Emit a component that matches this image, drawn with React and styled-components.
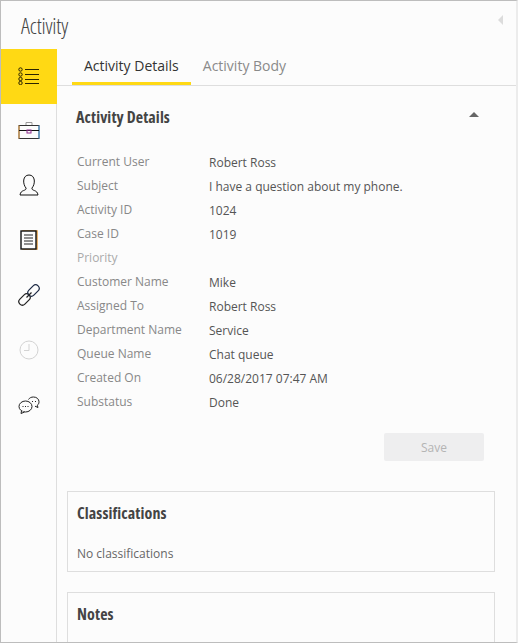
import React from "react";
import styled, { createGlobalStyle } from "styled-components";

const GlobalStyle = createGlobalStyle`
  html, body {
    margin: 0;
    padding: 0;
    height: 100%;
    overflow: hidden;
    background: #fcfcfc;
  }
  * { box-sizing: border-box; }
`;

const Panel = styled.div`
  width: 518px;
  height: 643px;
  overflow: hidden;
  display: flex;
  flex-direction: column;
  position: relative;
  background: #fcfcfc;
  border-top: 1px solid #bdbdbd;
  border-left: 1px solid #bdbdbd;
  border-bottom: 1px solid #bdbdbd;
  border-right: 2px solid #ececec;
  font-family: "Open Sans", "Liberation Sans", sans-serif;
  font-size: 12px;
  color: #555;
`;

const Header = styled.div`
  flex: 0 0 48px;
  display: flex;
  align-items: center;
  justify-content: space-between;
  padding: 0 13px 0 20px;
`;

const Title = styled.h1`
  margin: 0 0 1px;
  font-weight: 300;
  font-size: 22px;
  letter-spacing: -0.2px;
  color: #444;
  font-stretch: 75%;
`;

const CollapseArrow = styled.span`
  width: 0;
  height: 0;
  margin-bottom: 10px;
  border-style: solid;
  border-width: 5px 5px 5px 0;
  border-color: transparent #dcdcdc transparent transparent;
`;

const Body = styled.div`
  flex: 1;
  display: flex;
  min-height: 0;
`;

const Sidebar = styled.nav`
  flex: 0 0 56px;
  border-right: 1px solid #dedede;
  display: flex;
  flex-direction: column;
`;

const NavItem = styled.div`
  flex: 0 0 55px;
  margin-right: ${(p) => (p.$active ? "-1px" : "0")};
  padding-bottom: ${(p) => (p.$active ? "2px" : "4px")};
  position: relative;
  background: ${(p) => (p.$active ? "#ffd914" : "transparent")};
  display: flex;
  align-items: center;
  justify-content: center;
  opacity: ${(p) => (p.$muted ? 0.2 : 1)};
`;

const Main = styled.main`
  flex: 1;
  min-width: 0;
  display: flex;
  flex-direction: column;
`;

const Tabs = styled.div`
  flex: 0 0 37px;
  display: flex;
  padding-left: 15px;
  border-bottom: 1px solid #dedede;
`;

const Tab = styled.div`
  height: 36px;
  padding: 7px 12px 0;
  font-size: 14px;
  line-height: 19px;
  color: ${(p) => (p.$active ? "#333" : "#8a8a8a")};
  border-bottom: 3px solid ${(p) => (p.$active ? "#ffd914" : "transparent")};
`;

const Details = styled.section`
  padding: 0 33px 0 19px;
`;

const SectionHead = styled.div`
  display: flex;
  align-items: center;
  justify-content: space-between;
  height: 62px;
  padding-right: 4px;
`;

const Heading = styled.h2`
  margin: 0;
  font-size: 16px;
  line-height: 22px;
  font-weight: 700;
  font-stretch: 75%;
  letter-spacing: 0.1px;
  color: #444;
  white-space: nowrap;
`;

const Caret = styled.span`
  width: 0;
  height: 0;
  margin: 0 0 6px;
  border-style: solid;
  border-width: 0 5px 5px 5px;
  border-color: transparent transparent #666 transparent;
`;

const Fields = styled.dl`
  margin: 2px 0 0 1px;
  display: grid;
  grid-template-columns: 132px 1fr;
  grid-auto-rows: 24px;
  align-items: center;
`;

const Label = styled.dt`
  color: ${(p) => (p.$faint ? "#aaa" : "#888")};
  line-height: 24px;
`;

const Value = styled.dd`
  margin: 1px 0 0;
  color: #555;
  line-height: 24px;
`;

const Actions = styled.div`
  display: flex;
  justify-content: flex-end;
  margin: 19px -1px 0 0;
`;

const SaveButton = styled.button`
  width: 100px;
  height: 28px;
  border: 0;
  border-radius: 2px;
  background: #eeeeef;
  color: #b4b4b4;
  font: inherit;
`;

const Cards = styled.div`
  margin-top: 30px;
  padding: 0 21px 0 10px;
  display: flex;
  flex-direction: column;
  gap: 20px;
`;

const Card = styled.div`
  border: 1px solid #dedede;
  padding: 10px 9px 8px;
  min-height: 81px;
`;

const CardTitle = styled(Heading)`
  margin-bottom: 21px;
`;

const EmptyText = styled.div`
  line-height: 18px;
  color: #666;
`;

const ListIcon = () => (
  <svg width="22" height="18" viewBox="0 0 22 18" fill="none" stroke="#2b2400">
    <circle cx="2.500" cy="2.500" r="1.700" />
    <circle cx="2.500" cy="7.500" r="1.700" />
    <circle cx="2.500" cy="12" r="1.700" />
    <circle cx="2.500" cy="16" r="1.700" />
    <path d="M7 2.500h14M7 7.500h14M7 12.500h14M7 16.500h14" />
  </svg>
);

const CaseIcon = () => (
  <svg width="22" height="18" viewBox="0 0 22 18" fill="none">
    <path d="M8 4V1.500h6V4" stroke="#999" />
    <rect x="1" y="4.500" width="20" height="13" stroke="#333" />
    <path d="M1 4.500v13" stroke="#e29a3c" />
    <path d="M21 4.500v13" stroke="#4aa3e8" />
    <path d="M1 9.500h20" stroke="#111" />
    <rect x="9" y="9" width="4" height="3" stroke="#8e2a8e" />
  </svg>
);

const PersonIcon = () => (
  <svg width="20" height="22" viewBox="0 0 20 22" fill="none" stroke="#111">
    <path d="M7 14C3.500 10 3.500 1 10 1s6.500 9 3 13c-.5 1.500 1 2 2.500 2.600 1.700.7 3 1.400 3.500 4.400H1c.5-3 1.800-3.700 3.500-4.400C6 16 7.500 15.500 7 14z" />
  </svg>
);

const NotesIcon = () => (
  <svg width="18" height="20" viewBox="0 0 18 20" fill="none">
    <rect x="3" y="1" width="14" height="18" stroke="#e29a3c" strokeWidth="1.500" />
    <rect x="1" y="1" width="15" height="18" fill="#fcfcfc" stroke="#111" strokeWidth="1.400" />
    <path d="M4 5h9M4 8h9M4 11h9M4 14h9" stroke="#222" />
  </svg>
);

const LinkIcon = () => (
  <svg width="22" height="22" viewBox="0 0 22 22" fill="none" stroke="#222" strokeWidth="1.200">
    <rect x="0" y="12" width="13" height="7" rx="3.500" transform="rotate(-45 6.500 15.500)" />
    <rect x="9" y="3" width="13" height="7" rx="3.500" transform="rotate(-45 15.500 6.500)" stroke="#1d2a44" />
    <path d="M8.500 13.500l5-5" />
  </svg>
);

const ClockIcon = () => (
  <svg width="20" height="20" viewBox="0 0 20 20" fill="none" stroke="#333">
    <circle cx="10" cy="10" r="9" />
    <path d="M10 4v6.500H5" />
  </svg>
);

const ChatIcon = () => (
  <svg width="22" height="18" viewBox="0 0 22 18" fill="none" stroke="#222">
    <path d="M10.500 3.500C11.500 1.800 13.300 1 15.500 1c3.200 0 5.500 2.100 5.500 4.800 0 1.500-.6 2.700-1.700 3.500l.7 2.200-3-1.300" />
    <ellipse cx="7.500" cy="10.500" rx="6.500" ry="5.500" fill="#fcfcfc" />
    <path d="M3.500 15l-.5 2.500 3.500-1.500" fill="#fcfcfc" />
    <path d="M4.500 10.500h1M7 10.500h1M9.500 10.500h1M14 5.500h1M17 5.500h1" />
  </svg>
);

const fields = [
  ["Current User", "Robert Ross"],
  ["Subject", "I have a question about my phone."],
  ["Activity ID", "1024"],
  ["Case ID", "1019"],
  ["Priority", "", true],
  ["Customer Name", "Mike"],
  ["Assigned To", "Robert Ross"],
  ["Department Name", "Service"],
  ["Queue Name", "Chat queue"],
  ["Created On", "06/28/2017 07:47 AM"],
  ["Substatus", "Done"],
];

export default function App() {
  return (
    <>
      <GlobalStyle />
      <Panel>
        <Header>
          <Title>Activity</Title>
          <CollapseArrow />
        </Header>
        <Body>
          <Sidebar>
            <NavItem $active><ListIcon /></NavItem>
            <NavItem><CaseIcon /></NavItem>
            <NavItem><PersonIcon /></NavItem>
            <NavItem><NotesIcon /></NavItem>
            <NavItem><LinkIcon /></NavItem>
            <NavItem $muted><ClockIcon /></NavItem>
            <NavItem><ChatIcon /></NavItem>
          </Sidebar>
          <Main>
            <Tabs>
              <Tab $active>Activity Details</Tab>
              <Tab>Activity Body</Tab>
            </Tabs>
            <Details>
              <SectionHead>
                <Heading>Activity Details</Heading>
                <Caret />
              </SectionHead>
              <Fields>
                {fields.map(([label, value, faint]) => (
                  <React.Fragment key={label}>
                    <Label $faint={faint}>{label}</Label>
                    <Value>{value}</Value>
                  </React.Fragment>
                ))}
              </Fields>
              <Actions>
                <SaveButton disabled>Save</SaveButton>
              </Actions>
            </Details>
            <Cards>
              <Card>
                <CardTitle>Classifications</CardTitle>
                <EmptyText>No classifications</EmptyText>
              </Card>
              <Card>
                <CardTitle>Notes</CardTitle>
              </Card>
            </Cards>
          </Main>
        </Body>
      </Panel>
    </>
  );
}
